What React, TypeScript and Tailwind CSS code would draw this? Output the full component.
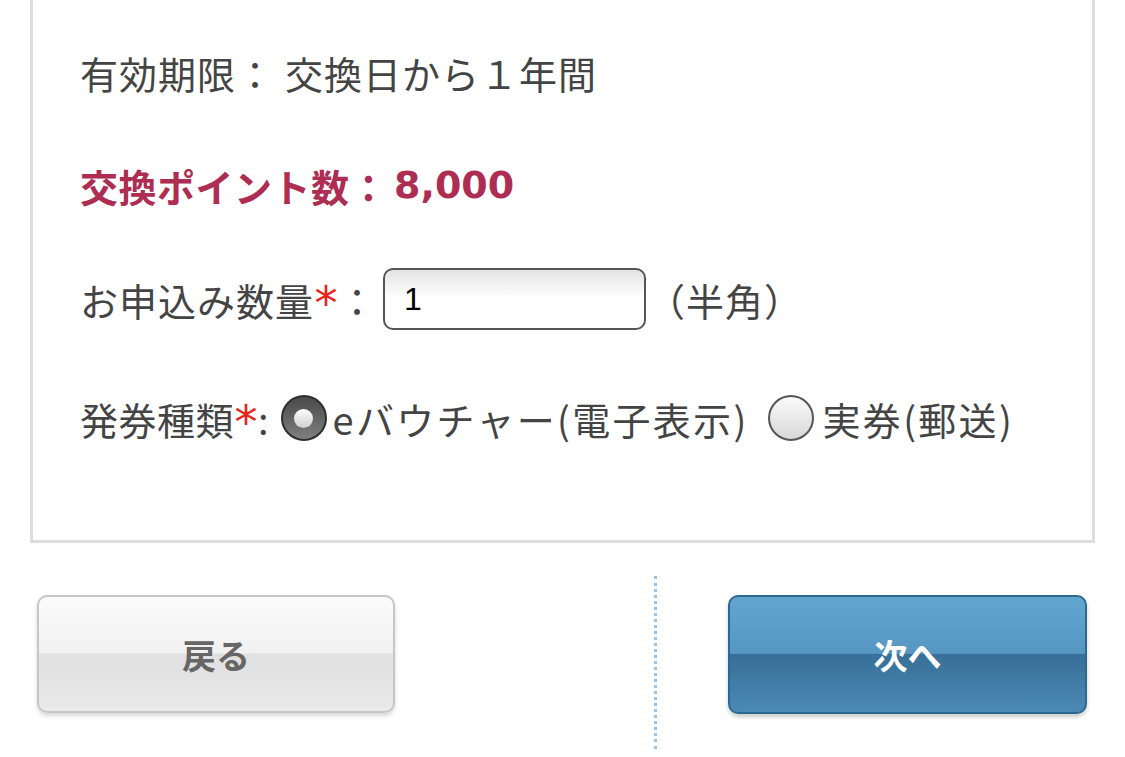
const font = { fontFamily: '"Noto Sans CJK JP", "Noto Sans", sans-serif' };

function Radio({ checked }: { checked: boolean }) {
  if (checked) {
    return (
      <span className="flex h-[46px] w-[46px] shrink-0 items-center justify-center rounded-full border-2 border-[#2f2f2f] bg-gradient-to-b from-[#4a4a4a] to-[#808080]">
        <span className="h-[19px] w-[19px] rounded-full bg-gradient-to-b from-[#ffffff] to-[#cfcfcf]" />
      </span>
    );
  }
  return (
    <span className="block h-[46px] w-[46px] shrink-0 rounded-full border-2 border-[#555] bg-gradient-to-b from-[#fafafa] to-[#d8d8d8]" />
  );
}

function Required() {
  return (
    <span className="flex h-[38px] w-[24px] items-start justify-center text-[46px] leading-[46px] text-[#e8241c]" style={{ fontFamily: '"DejaVu Sans", sans-serif' }}>
      *
    </span>
  );
}

export default function App() {
  return (
    <div className="min-h-[757px] w-[1125px] bg-white text-[#444]" style={font}>
      {/* form panel, its top runs off the page */}
      <div className="ml-[30px] w-[1065px] border-x-[3px] border-b-[3px] border-[#dddddd] pl-[47px] pb-[92px]">
        <div className="box-content flex h-[60px] items-center pt-[42px] text-[38px] tracking-[1px]">
          <span>有効期限：</span>
          <span className="ml-[10px]">交換日から１年間</span>
        </div>

        <div className="mt-[53px] flex h-[60px] items-center text-[38px] font-bold text-[#ad2d53]">
          <span className="tracking-[0.5px]">交換ポイント数：</span>
          <span className="ml-[6px]" style={{ fontFamily: '"DejaVu Sans", sans-serif' }}>8,000</span>
        </div>

        <div className="mt-[53px] flex h-[62px] items-center text-[38px]">
          <span className="tracking-[1px]">お申込み数量</span>
          <Required />
          <span>：</span>
          <div className="ml-[7px] flex h-[62px] w-[263px] shrink-0 items-center rounded-[10px] border-2 border-[#555] bg-gradient-to-b from-[#e4e4e4] via-white to-white pl-[19px] text-[32px] text-black" style={{ fontFamily: '"Liberation Sans", Arial, sans-serif' }}>
            1
          </div>
          <span className="ml-[1px] tracking-[1px]">（半角）</span>
        </div>

        <div className="mt-[58px] flex h-[60px] items-center text-[38px]">
          <span className="tracking-[0.5px]">発券種類</span>
          <Required />
          <span>:</span>
          <span className="ml-[12px] flex">
            <Radio checked />
          </span>
          <span className="ml-[6px] tracking-[2.3px]">eバウチャー(電子表示)</span>
          <span className="ml-[19px] flex">
            <Radio checked={false} />
          </span>
          <span className="ml-[9px] tracking-[2.3px]">実券(郵送)</span>
        </div>
      </div>

      {/* buttons */}
      <div className="mt-[33px] flex items-start">
        <button className="ml-[37px] mt-[19px] flex h-[118px] w-[358px] items-center justify-center overflow-hidden rounded-[10px] border-2 border-[#c6c6c6] bg-[linear-gradient(to_bottom,#fbfbfb_0%,#f1f1f1_49%,#e0e0e0_50%,#e9e9e9_100%)] text-[34px] font-bold text-[#666] shadow-[0_3px_4px_rgba(0,0,0,0.15)]">
          戻る
        </button>
        <div className="ml-[259px] h-[173px] w-0 border-l-[3px] border-dotted border-[#9cc0f0]" />
        <button className="ml-[71px] mt-[19px] flex h-[119px] w-[359px] items-center justify-center overflow-hidden rounded-[10px] border-2 border-[#2d6890] bg-[linear-gradient(to_bottom,#61a6d1_0%,#5697c2_49%,#376f98_50%,#4a8ab4_100%)] text-[34px] font-bold text-white shadow-[0_3px_4px_rgba(0,0,0,0.2)]">
          次へ
        </button>
      </div>
    </div>
  );
}
